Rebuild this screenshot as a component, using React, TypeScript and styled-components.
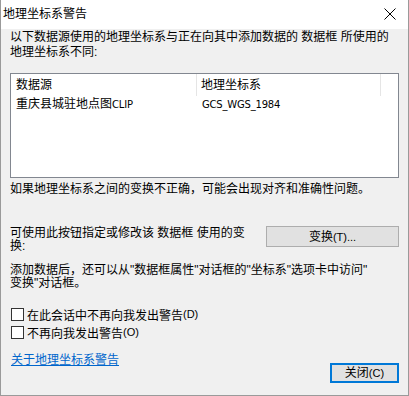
import React from "react";
import styled, { createGlobalStyle } from "styled-components";

const GlobalStyle = createGlobalStyle`
  html, body { margin: 0; padding: 0; background: #ffffff; }
  body {
    font-family: "Liberation Sans", "Noto Sans CJK SC", sans-serif;
    font-size: 12px;
    color: #000;
  }
  * { box-sizing: border-box; }
`;

const Window = styled.div`
  width: 409px;
  height: 396px;
  display: flex;
  flex-direction: column;
  border: 1px solid #9a9a9a;
  border-top: none;
  background: #f0f0f0;
`;

const TitleBar = styled.div`
  height: 29px;
  background: #ffffff;
  display: flex;
  align-items: center;
  justify-content: space-between;
  padding: 0 12px 1px 2px;
`;

const Title = styled.span`
  font-size: 12px;
  line-height: 14px;
`;

const CloseIcon = styled.svg`
  width: 12px;
  height: 12px;
  display: block;
`;

const Body = styled.div`
  flex: 1;
  display: flex;
  flex-direction: column;
  padding: 1px 9px 0 9px;
`;

const Para = styled.p<{ $lh?: number; $mt?: number }>`
  margin: ${(p) => p.$mt ?? 0}px 0 0 0;
  line-height: ${(p) => p.$lh ?? 13}px;
  white-space: nowrap;
`;

const ListBox = styled.div`
  margin-top: 13px;
  height: 105px;
  background: #ffffff;
  border: 1px solid #828790;
`;

const Columns = styled.div`
  display: grid;
  grid-template-columns: 186px 184px 1fr;
`;

const HeaderCell = styled.div<{ $first?: boolean; $sep?: boolean }>`
  height: 22px;
  line-height: 22px;
  padding-left: ${(p) => (p.$first ? 5 : 4)}px;
  border-right: ${(p) => (p.$sep ? "1px solid #e5e5e5" : "none")};
`;

const Cell = styled.div`
  height: 16px;
  line-height: 16px;
  padding-left: 5px;
  white-space: nowrap;
`;

const Latin = styled.span`
  font-family: "DejaVu Sans", sans-serif;
  font-size: 10px;
  letter-spacing: -0.2px;
`;

const TransformRow = styled.div`
  margin-top: 30px;
  display: flex;
  align-items: flex-start;
  justify-content: space-between;
`;

const TransformText = styled.p`
  margin: 1px 0 0 0;
  line-height: 13px;
  width: 250px;
  white-space: nowrap;
`;

const Button = styled.button<{ $default?: boolean }>`
  font-family: "Liberation Sans", "Noto Sans CJK SC", sans-serif;
  font-size: 12px;
  color: #000;
  background: #e1e1e1;
  border: 1px solid ${(p) => (p.$default ? "#0078d7" : "#adadad")};
  box-shadow: ${(p) => (p.$default ? "inset 0 0 0 1px #0078d7" : "none")};
  padding: 0;
  margin: 0;
  display: flex;
  align-items: center;
  justify-content: center;
  line-height: 14px;
`;

const TransformButton = styled(Button)`
  width: 133px;
  height: 21px;
`;

const CloseButton = styled(Button)`
  width: 69px;
  height: 20px;
  margin-top: 9px;
`;

const Accel = styled.span`
  font-family: "Liberation Sans", sans-serif;
  font-size: 11px;
`;

const Checks = styled.div`
  margin-top: 15px;
  display: flex;
  flex-direction: column;
`;

const CheckRow = styled.label`
  height: 18px;
  display: flex;
  align-items: center;
  padding-left: 1px;
`;

const Box = styled.span`
  width: 13px;
  height: 13px;
  margin-right: 3px;
  border: 1px solid #333333;
  background: #ffffff;
  display: inline-block;
`;

const Footer = styled.div`
  margin-top: 13px;
  display: flex;
  justify-content: space-between;
  align-items: flex-start;
`;

const Link = styled.a`
  color: #0066cc;
  text-decoration: underline;
  line-height: 13px;
  padding-left: 1px;
  cursor: pointer;
`;

export default function App() {
  return (
    <>
      <GlobalStyle />
      <Window>
        <TitleBar>
          <Title>地理坐标系警告</Title>
          <CloseIcon viewBox="0 0 12 12">
            <path d="M0.5 0.5 L11.5 11.5 M11.5 0.5 L0.5 11.5" stroke="#000" strokeWidth="1" fill="none" />
          </CloseIcon>
        </TitleBar>
        <Body>
          <Para $lh={15} $mt={0}>
            以下数据源使用的地理坐标系与正在向其中添加数据的 数据框 所使用的
            <br />
            地理坐标系不同:
          </Para>
          <ListBox>
            <Columns>
              <HeaderCell $first $sep>数据源</HeaderCell>
              <HeaderCell $sep>地理坐标系</HeaderCell>
              <HeaderCell />
              <Cell>
                重庆县城驻地点图<Latin>CLIP</Latin>
              </Cell>
              <Cell>
                <Latin>GCS_WGS_1984</Latin>
              </Cell>
              <Cell />
            </Columns>
          </ListBox>
          <Para $mt={5}>如果地理坐标系之间的变换不正确，可能会出现对齐和准确性问题。</Para>
          <TransformRow>
            <TransformText>
              可使用此按钮指定或修改该 数据框 使用的变
              <br />
              换:
            </TransformText>
            <TransformButton>
              变换<Accel>(T)...</Accel>
            </TransformButton>
          </TransformRow>
          <Para $mt={11}>
            添加数据后，还可以从"数据框属性"对话框的"坐标系"选项卡中访问"
            <br />
            变换"对话框。
          </Para>
          <Checks>
            <CheckRow>
              <Box />
              在此会话中不再向我发出警告<Accel>(D)</Accel>
            </CheckRow>
            <CheckRow>
              <Box />
              不再向我发出警告<Accel>(O)</Accel>
            </CheckRow>
          </Checks>
          <Footer>
            <Link>关于地理坐标系警告</Link>
            <CloseButton $default>
              关闭<Accel>(C)</Accel>
            </CloseButton>
          </Footer>
        </Body>
      </Window>
    </>
  );
}
